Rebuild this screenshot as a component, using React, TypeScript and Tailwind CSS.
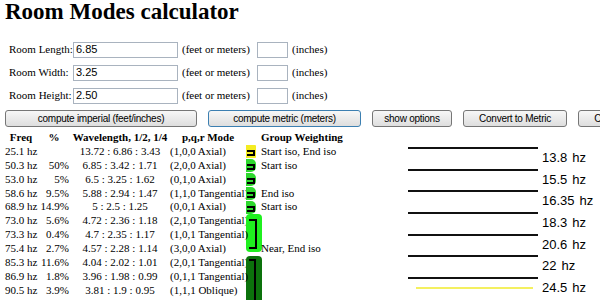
import React from "react";

type Mode = { freq: string; pct: string; wave: string; mode: string; note: string };

const modes: Mode[] = [
  { freq: "25.1 hz", pct: "", wave: "13.72 : 6.86 : 3.43", mode: "(1,0,0 Axial)", note: "Start iso, End iso" },
  { freq: "50.3 hz", pct: "50%", wave: "6.85 : 3.42 : 1.71", mode: "(2,0,0 Axial)", note: "Start iso" },
  { freq: "53.0 hz", pct: "5%", wave: "6.5 : 3.25 : 1.62", mode: "(0,1,0 Axial)", note: "" },
  { freq: "58.6 hz", pct: "9.5%", wave: "5.88 : 2.94 : 1.47", mode: "(1,1,0 Tangential)", note: "End iso" },
  { freq: "68.9 hz", pct: "14.9%", wave: "5 : 2.5 : 1.25", mode: "(0,0,1 Axial)", note: "Start iso" },
  { freq: "73.0 hz", pct: "5.6%", wave: "4.72 : 2.36 : 1.18", mode: "(2,1,0 Tangential)", note: "" },
  { freq: "73.3 hz", pct: "0.4%", wave: "4.7 : 2.35 : 1.17", mode: "(1,0,1 Tangential)", note: "" },
  { freq: "75.4 hz", pct: "2.7%", wave: "4.57 : 2.28 : 1.14", mode: "(3,0,0 Axial)", note: "Near, End iso" },
  { freq: "85.3 hz", pct: "11.6%", wave: "4.04 : 2.02 : 1.01", mode: "(2,0,1 Tangential)", note: "" },
  { freq: "86.9 hz", pct: "1.8%", wave: "3.96 : 1.98 : 0.99", mode: "(0,1,1 Tangential)", note: "" },
  { freq: "90.5 hz", pct: "3.9%", wave: "3.81 : 1.9 : 0.95", mode: "(1,1,1 Oblique)", note: "" },
  { freq: "92.4 hz", pct: "1.8%", wave: "3.71 : 1.85 : 0.93", mode: "(3,1,0 Tangential)", note: "Start iso" },
];

const isoLines = ["13.8", "15.5", "16.35", "18.3", "20.6", "22", "24.5"];

const dims = [
  { label: "Room Length:", value: "6.85" },
  { label: "Room Width:", value: "3.25" },
  { label: "Room Height:", value: "2.50" },
];

const btn =
  "h-[17px] shrink-0 whitespace-nowrap rounded-[3px] border bg-gradient-to-b from-[#f7f7f7] to-[#dedede] text-[10px] tracking-[-0.25px] leading-none text-black font-['Liberation_Sans',Arial,sans-serif]";

function SingleMark({ color, rounded }: { color: string; rounded: boolean }) {
  return (
    <div className="col-start-5 flex items-center">
      <div className={`w-[10px] h-[13px] pt-[5px] pl-[1px] ${color} ${rounded ? "rounded-r-[5px]" : "rounded-r-[1px]"}`}>
        <div className="w-[8px] h-[6px] border-2 border-l-0 border-black" />
      </div>
    </div>
  );
}

function BarCell({ index }: { index: number }) {
  if (index === 0) return <SingleMark color="bg-[#f4ec22]" rounded={false} />;
  if (index < 5) return <SingleMark color="bg-[#2ed82e]" rounded />;
  if (index === 5)
    return (
      <div className="col-start-5 row-span-3">
        <div className="w-[16px] h-[38px] rounded-[4px] bg-[#1ff01f] pt-[5px] pl-[3px]">
          <div className="w-[8px] h-[30px] border-2 border-l-0 border-black" />
        </div>
      </div>
    );
  if (index === 8)
    return (
      <div className="col-start-5 row-span-4">
        <div className="w-[16px] h-full rounded-t-[4px] bg-[#0c720c] pt-[3px] pl-[3px]">
          <div className="w-[7px] h-[60px] border-t-2 border-r-2 border-black" />
        </div>
      </div>
    );
  return null;
}

export default function App() {
  return (
    <div className="w-[600px] h-[300px] overflow-hidden bg-white text-black font-['Liberation_Serif','Times_New_Roman',serif]">
      <h1 className="pl-[5px] text-[23px] leading-[24px] font-bold">Room Modes calculator</h1>

      <div className="mt-[14px] flex flex-col">
        {dims.map((d) => (
          <div key={d.label} className="h-[23px] flex items-center pl-[9px] text-[11px]">
            <span className="w-[64px]">{d.label}</span>
            <input
              readOnly
              value={d.value}
              className="w-[105px] h-[16px] border border-[#a9b3bf] px-[2px] text-[11px] font-['Liberation_Sans',Arial,sans-serif] outline-none"
            />
            <span className="ml-[4px] w-[75px]">(feet or meters)</span>
            <input readOnly className="w-[31px] h-[16px] border border-[#a9b3bf] outline-none" />
            <span className="ml-[4px]">(inches)</span>
          </div>
        ))}
      </div>

      <div className="mt-[3px] flex pl-[5px] gap-[11px]">
        <button className={`${btn} w-[192px] border-[#767676]`}>compute imperial (feet/inches)</button>
        <button className={`${btn} w-[153px] border-[#3c7fb1]`}>compute metric (meters)</button>
        <button className={`${btn} w-[80px] border-[#767676]`}>show options</button>
        <button className={`${btn} w-[104px] border-[#767676]`}>Convert to Metric</button>
        <button className={`${btn} w-[112px] border-[#767676]`}>Convert to Imperial</button>
      </div>

      <div className="mt-[4px] flex pl-[4px]">
        <div className="grid grid-cols-[34px_32px_100px_76px_15px_147px] auto-rows-[13.9px] text-[11px] leading-[13.9px] whitespace-nowrap">
          <div className="font-bold text-center">Freq</div>
          <div className="font-bold text-center">%</div>
          <div className="font-bold text-center">Wavelength, 1/2, 1/4</div>
          <div className="font-bold text-center">p,q,r Mode</div>
          <div />
          <div className="font-bold">Group Weighting</div>
          {modes.map((m, i) => (
            <React.Fragment key={m.freq}>
              <div className="col-start-1 pl-[1px]">{m.freq}</div>
              <div className="text-right pr-[1px]">{m.pct}</div>
              <div className="text-center">{m.wave}</div>
              <div>{m.mode}</div>
              <BarCell index={i} />
              <div className="col-start-6">{m.note}</div>
            </React.Fragment>
          ))}
        </div>

        <div className="pt-[16px] flex flex-col">
          {isoLines.map((v, i) => (
            <div key={v} className="h-[21.67px] flex">
              <div className="w-[130px] flex flex-col">
                <div className="h-[2px] bg-[#111]" />
                {i === isoLines.length - 1 && <div className="mt-[8px] ml-[8px] w-[117px] h-[2px] bg-[#f4f060]" />}
              </div>
              <div className="ml-[4px] pt-[3px] text-[13px] leading-[16px] font-['Liberation_Sans',Arial,sans-serif]">
                {v}
                <span className="ml-[5px]">hz</span>
              </div>
            </div>
          ))}
        </div>
      </div>
    </div>
  );
}
